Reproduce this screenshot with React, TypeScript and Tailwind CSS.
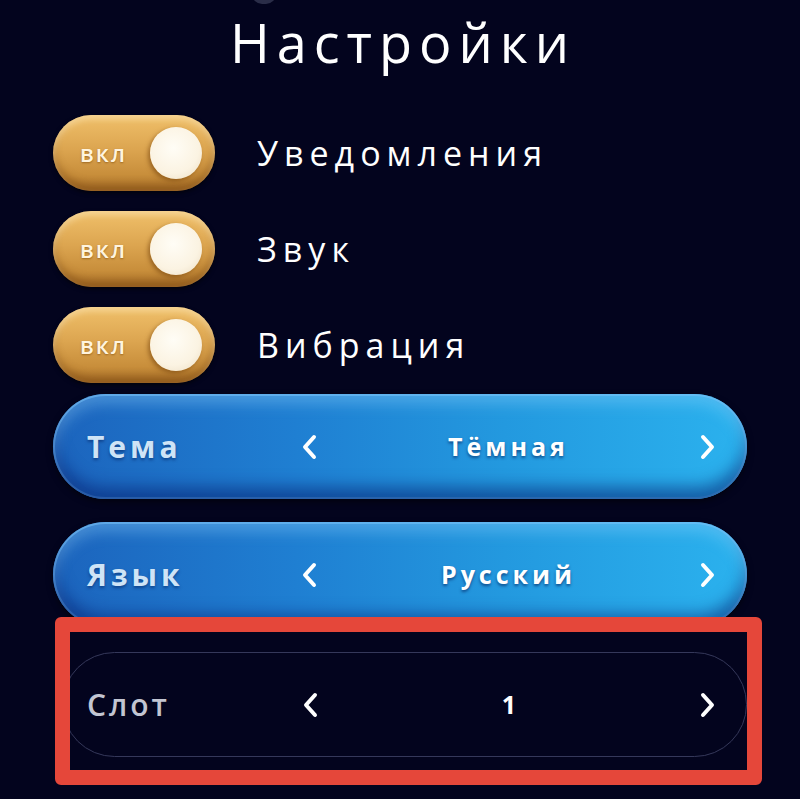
import React from 'react';

const Chevron: React.FC<{ dir: 'left' | 'right' }> = ({ dir }) => (
  <svg width="18" height="28" viewBox="0 0 18 28" fill="none" className="shrink-0">
    <path
      d={dir === 'left' ? 'M14 4 L5 14 L14 24' : 'M4 4 L13 14 L4 24'}
      stroke="white"
      strokeWidth="4"
      strokeLinecap="round"
      strokeLinejoin="round"
    />
  </svg>
);

const Toggle: React.FC<{ label: string }> = ({ label }) => (
  <div className="flex items-center gap-[42px]">
    <div className="relative flex h-[76px] w-[162px] shrink-0 items-center justify-between rounded-full bg-[linear-gradient(180deg,#f0c06a_0%,#dca550_45%,#c78d3a_80%,#a86f28_100%)] pl-[27px] pr-[13px] shadow-[inset_0_4px_6px_rgba(255,235,190,0.55),inset_0_-6px_8px_rgba(110,60,10,0.45),0_2px_4px_rgba(0,0,0,0.6)]">
      <span className="text-[23px] font-semibold tracking-[2px] text-[#fff4de] [text-shadow:0_1px_2px_rgba(120,70,10,0.6)]">вкл</span>
      <div className="h-[52px] w-[52px] rounded-full bg-[radial-gradient(circle_at_45%_40%,#fffdf6_0%,#fbf3e2_60%,#eadbc0_100%)] shadow-[-2px_2px_4px_rgba(110,60,10,0.55)]" />
    </div>
    <span className="text-[34px] tracking-[6px] text-white">{label}</span>
  </div>
);

const BluePicker: React.FC<{ label: string; value: string }> = ({ label, value }) => (
  <div className="flex h-[105px] w-[694px] items-center rounded-full bg-[linear-gradient(90deg,#1c64bd_0%,#1f7fd2_35%,#2399df_65%,#2bb2ee_100%)] pl-[34px] pr-[30px] shadow-[inset_0_10px_14px_rgba(150,215,255,0.35),inset_0_-12px_16px_rgba(5,30,110,0.55),inset_0_0_0_2px_rgba(110,190,250,0.55),0_3px_6px_rgba(0,0,0,0.5)]">
    <span className="w-[213px] shrink-0 text-[30px] font-bold tracking-[4px] text-[#cfe4f6] [text-shadow:0_2px_3px_rgba(0,30,90,0.5)]">
      {label}
    </span>
    <Chevron dir="left" />
    <span className="flex-1 text-center text-[25px] font-bold tracking-[4px] text-white [text-shadow:0_2px_3px_rgba(0,30,90,0.6)]">
      {value}
    </span>
    <Chevron dir="right" />
  </div>
);

export default function App() {
  return (
    <div className="relative h-[799px] w-[800px] overflow-hidden bg-[#03041e] font-['Open_Sans',sans-serif]">
      <div className="absolute left-[252px] top-[-16px] h-[20px] w-[24px] rounded-full bg-[#2a2d48]" />

      <h1 className="pt-[12px] pl-[6px] text-center text-[54px] font-medium leading-[60px] tracking-[7px] text-white">Настройки</h1>

      <div className="mt-[43px] flex flex-col gap-[20px] pl-[53px]">
        <Toggle label="Уведомления" />
        <Toggle label="Звук" />
        <Toggle label="Вибрация" />
      </div>

      <div className="mt-[11px] flex flex-col gap-[23px] pl-[53px]">
        <BluePicker label="Тема" value="Тёмная" />
        <BluePicker label="Язык" value="Русский" />
      </div>

      {/* slot picker, framed in red */}
      <div className="relative z-10 -mt-[10px] ml-[55px] h-[168px] w-[707px] overflow-hidden rounded-[6px] border-[15px] border-[#e5473a] bg-[#03041e] pt-[20px]">
        <div className="-ml-[8px] flex h-[105px] w-[685px] items-center rounded-full border-[1.5px] border-[#35385a] pl-[24px] pr-[29px]">
          <span className="w-[214px] shrink-0 text-[30px] font-semibold tracking-[3px] text-[#c2c5d2]">Слот</span>
          <Chevron dir="left" />
          <span className="flex-1 text-center text-[25px] font-bold text-white">1</span>
          <Chevron dir="right" />
        </div>
      </div>
    </div>
  );
}
